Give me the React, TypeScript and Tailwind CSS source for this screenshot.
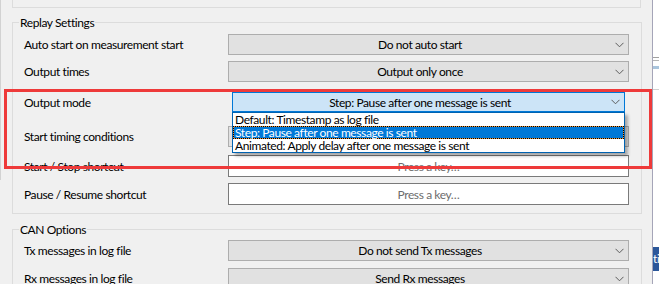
import React from 'react';

const font = { fontFamily: 'Lato, "Noto Sans", sans-serif' };

const Chevron: React.FC = () => (
  <svg width="9" height="6" viewBox="0 0 9 6" className="shrink-0">
    <path d="M0.5 0.8 L4.5 4.8 L8.5 0.8" fill="none" stroke="#5c5c5c" strokeWidth="1" />
  </svg>
);

const Combo: React.FC<{ value: string; focused?: boolean; className?: string }> = ({ value, focused, className = '' }) => (
  <div
    className={`relative shrink-0 flex items-center border ${
      focused ? 'bg-[#cce4f7] border-[#0078d7]' : 'bg-[#e1e1e1] border-[#adadad]'
    } ${className}`}
  >
    <span className="flex-1 text-center pr-[17px] text-black whitespace-nowrap">{value}</span>
    <span className="absolute right-[4px] top-1/2 -translate-y-1/2 flex">
      <Chevron />
    </span>
  </div>
);

const KeyBox: React.FC = () => (
  <div className="shrink-0 w-[401px] h-[22px] bg-white border border-[#7a7a7a] flex items-center justify-center text-[#6d6d6d]">
    Press a key…
  </div>
);

const Row: React.FC<{ label: string; className?: string; children: React.ReactNode }> = ({ label, className = '', children }) => (
  <div className={`shrink-0 flex items-center ${className}`}>
    <div className="w-[215px] pl-[11px] whitespace-nowrap text-black">{label}</div>
    {children}
  </div>
);

const Group: React.FC<{ title: string; className?: string; children: React.ReactNode }> = ({ title, className = '', children }) => (
  <div className={`shrink-0 ml-[11px] w-[630px] border border-[#dcdcdc] ${className}`}>
    <div className="-mt-[8px] ml-[6px] w-fit px-[1px] bg-[#f0f0f0] leading-[15px] text-black">{title}</div>
    {children}
  </div>
);

export default function App() {
  return (
    <div
      className="relative w-[659px] h-[284px] bg-[#f0f0f0] flex overflow-hidden text-[12px] leading-[15px] tracking-[-0.4px]"
      style={font}
    >
      {/* left window edge */}
      <div className="w-px shrink-0">
        <div className="h-[180px] bg-[#d2d2d2]" />
      </div>

      {/* settings panel */}
      <div className="w-[651px] shrink-0 flex flex-col">
        <div className="shrink-0 ml-[11px] w-[629px] h-[8px] border-x border-b border-[#dcdcdc]" />

        <Group title="Replay Settings" className="mt-[14px] pb-[8px]">
          <Row label="Auto start on measurement start" className="mt-[4px]">
            <Combo value="Do not auto start" className="w-[401px] h-[21px]" />
          </Row>
          <Row label="Output times" className="mt-[6px]">
            <Combo value="Output only once" className="w-[401px] h-[21px]" />
          </Row>
          <Row label="Output mode" className="mt-[10px]">
            <Combo value="Step: Pause after one message is sent" focused className="ml-[4px] w-[393px] h-[20px]" />
          </Row>
          <Row label="Start timing conditions" className="mt-[14px]">
            <Combo value="" className="w-[401px] h-[21px]" />
          </Row>
          <Row label="Start / Stop shortcut" className="mt-[8px]">
            <KeyBox />
          </Row>
          <Row label="Pause / Resume shortcut" className="mt-[6px]">
            <KeyBox />
          </Row>
        </Group>

        <Group title="CAN Options" className="mt-[15px] pb-[8px]">
          <Row label="Tx messages in log file" className="mt-[3px]">
            <Combo value="Do not send Tx messages" className="w-[401px] h-[21px]" />
          </Row>
          <Row label="Rx messages in log file" className="mt-[7px]">
            <Combo value="Send Rx messages" className="w-[401px] h-[21px]" />
          </Row>
        </Group>
      </div>

      {/* window border */}
      <div className="w-px shrink-0 bg-[#a5a5b8]" />

      {/* window behind */}
      <div className="flex-1 bg-white flex flex-col">
        <div className="shrink-0 mt-[57px] h-px bg-[#a0a0a0]" />
        <div className="shrink-0 mt-[2px] h-px bg-[#b4b4b4]" />
        <div className="shrink-0 mt-[5px] h-[3px] bg-[#a9c4dc]" />
        <div className="shrink-0 mt-[20px] h-px bg-[#d0d0d0]" />
        <div className="shrink-0 mt-[157px] h-[24px] bg-[#2b579a] text-white leading-[24px] whitespace-nowrap overflow-hidden">ti</div>
      </div>

      {/* open dropdown list */}
      <div className="absolute left-[232px] top-[112px] w-[393px] bg-white border border-[#0063b1] shadow-[3px_3px_3px_rgba(0,0,0,0.3)] leading-[13px]">
        <div className="h-[13px] pl-[2px] text-black whitespace-nowrap">Default: Timestamp as log file</div>
        <div className="h-[13px] bg-[#e8953a]">
          <div className="h-[13px] pl-[1px] border border-dotted border-black bg-[#0078d7] bg-clip-padding text-white leading-[11px] whitespace-nowrap">
            Step: Pause after one message is sent
          </div>
        </div>
        <div className="h-[13px] pl-[2px] text-black whitespace-nowrap">Animated: Apply delay after one message is sent</div>
      </div>

      {/* annotation */}
      <div className="absolute left-[4px] top-[89px] w-[648px] h-[80px] border-[3px] border-[#ee3a3a]" />
    </div>
  );
}
